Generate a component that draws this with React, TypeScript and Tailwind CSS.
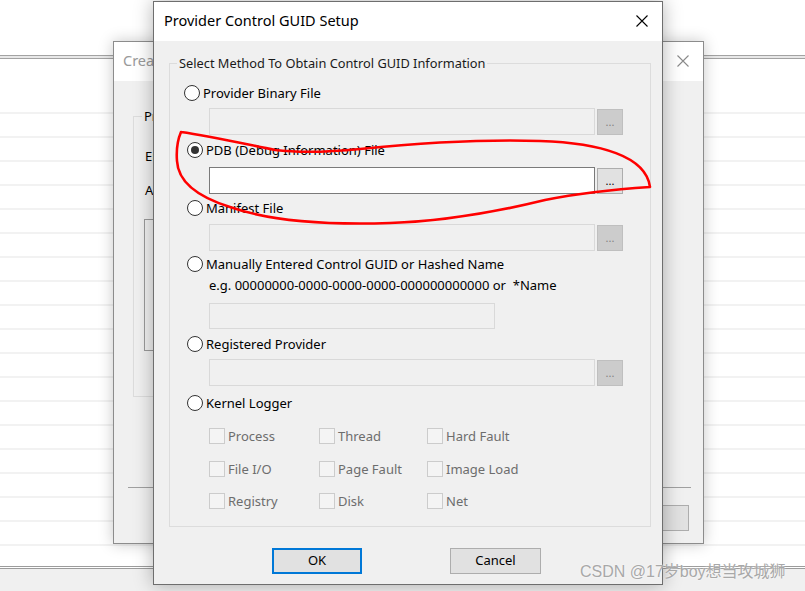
import React from 'react';

const FONT = '"Noto Sans", "Liberation Sans", sans-serif';

function CloseIcon({ color = '#000' }: { color?: string }) {
  return (
    <svg width="12" height="12" viewBox="0 0 12 12">
      <path d="M0.5 0.5 L11.5 11.5 M11.5 0.5 L0.5 11.5" stroke={color} strokeWidth="1.1" />
    </svg>
  );
}

function Radio({ checked = false }: { checked?: boolean }) {
  return (
    <span className="flex h-[16px] w-[16px] shrink-0 items-center justify-center rounded-full border-[1.5px] border-[#333333] bg-white">
      {checked && <span className="h-[8px] w-[8px] rounded-full bg-[#333333]" />}
    </span>
  );
}

function RadioRow({
  label,
  checked,
  className = '',
  first = false,
}: {
  label: string;
  checked?: boolean;
  className?: string;
  first?: boolean;
}) {
  return (
    <div className={`flex h-[18px] items-center gap-[3px] ${first ? 'ml-[14px]' : 'ml-[17px]'} ${className}`}>
      <Radio checked={checked} />
      <span className="text-[13px] leading-[18px] text-black">{label}</span>
    </div>
  );
}

function FileField({ enabled = false, className = '' }: { enabled?: boolean; className?: string }) {
  return (
    <div className={`ml-[39px] flex items-center gap-[2px] ${className}`}>
      <div
        className={`h-[27px] w-[386px] border ${
          enabled ? 'border-[#7a7a7a] bg-white' : 'border-[#d9d9d9] bg-[#f0f0f0]'
        }`}
      />
      <div
        className={`flex h-[26px] w-[26px] items-end justify-center border pb-[7px] text-[11px] leading-none ${
          enabled ? 'border-[#adadad] bg-[#e1e1e1] text-black' : 'border-[#bfbfbf] bg-[#cccccc] text-[#838383]'
        }`}
      >
        ...
      </div>
    </div>
  );
}

function Check({ label }: { label: string }) {
  return (
    <div className="flex h-[18px] items-center gap-[3px]">
      <span className="h-[16px] w-[16px] shrink-0 border border-[#cccccc] bg-[#f4f4f4]" />
      <span className="text-[13px] leading-[18px] text-[#6d6d6d]">{label}</span>
    </div>
  );
}

function RedMark() {
  return (
    <svg className="pointer-events-none absolute left-0 top-0" width="805" height="591">
      <path
        d="M181 132 C210 136 245 144 275 150 C300 153 330 152 360 149 C420 143 480 139 540 141 C600 143 646 156 650 187 C620 189 580 193 545 200 C500 211 450 221 390 223 C330 225 270 221 230 207 C195 196 178 181 177 161 C176 148 178 139 181 132"
        fill="none"
        stroke="#ff0000"
        strokeWidth="2.6"
        strokeLinecap="round"
        strokeLinejoin="round"
      />
    </svg>
  );
}

export default function App() {
  const rows = Array.from({ length: 20 });

  return (
    <div className="relative h-[591px] w-[805px] overflow-hidden bg-white" style={{ fontFamily: FONT }}>
      {/* list view behind the dialogs */}
      <div className="flex h-full flex-col">
        <div className="h-[55px]" />
        <div className="h-[4px] border-y border-[#a3a3a3] bg-[#e8e8e8]" />
        <div className="h-[53px]" />
        <div className="flex-1 overflow-hidden">
          {rows.map((_, i) => (
            <div key={i} className="h-[24px] border-t-2 border-[#f2f2f2]" />
          ))}
        </div>
        <div className="h-[3px] border-y border-[#9c9c9c] bg-white" />
        <div className="h-[22px] bg-[#f0f0f0]" />
      </div>

      {/* Create session dialog (behind) */}
      <div className="absolute left-[113px] top-[41px] flex h-[503px] w-[591px] flex-col border border-[#8c8c8c] bg-[#f0f0f0] shadow-[0_0_14px_rgba(0,0,0,0.22)]">
        <div className="flex h-[39px] items-center justify-between bg-white pb-[2px] pl-[9px] pr-[14px]">
          <span className="text-[14.5px] text-[#9a9a9a]">Create New Session</span>
          <CloseIcon color="#8a8a8a" />
        </div>
        <div className="flex flex-1 flex-col px-[13px]">
          <fieldset className="ml-[6px] mt-[26px] h-[290px] w-[520px] border border-[#dcdcdc]">
            <legend className="ml-[8px] px-[2px] text-[13px] leading-[18px]">Provider</legend>
            <div className="ml-[11px] mt-[22px] text-[13px] leading-[18px]">Enable Property</div>
            <div className="ml-[11px] mt-[16px] text-[13px] leading-[18px]">Available Providers</div>
            <div className="ml-[10px] mt-[20px] h-[132px] w-[480px] border border-[#9a9a9a] bg-[#f0f0f0]" />
          </fieldset>
          <div className="ml-[1px] mt-[90px] h-px w-[563px] bg-[#a0a0a0]" />
          <div className="mt-[17px] flex justify-end pr-[1px]">
            <div className="h-[26px] w-[90px] border border-[#adadad] bg-[#e1e1e1]" />
          </div>
        </div>
      </div>

      {/* Provider Control GUID Setup dialog */}
      <div className="absolute left-[153px] top-[1px] flex h-[584px] w-[510px] flex-col border border-[#6e6e6e] bg-[#f0f0f0] shadow-[0_0_18px_rgba(0,0,0,0.3)]">
        <div className="flex h-[39px] shrink-0 items-center justify-between bg-white pb-[2px] pl-[10px] pr-[14px]">
          <span className="text-[14.5px] text-black">Provider Control GUID Setup</span>
          <CloseIcon />
        </div>
        <div className="flex flex-1 flex-col px-[15px] pt-[13px]">
          <fieldset className="h-[473px] w-[482px] border border-[#dcdcdc]">
            <legend className="ml-[7px] px-[2px] text-[12.8px] leading-[18px] text-[#1a1a1a]">
              Select Method To Obtain Control GUID Information
            </legend>
            <RadioRow first label="Provider Binary File" className="mt-[12px]" />
            <FileField className="mt-[6px]" />
            <RadioRow checked label="PDB (Debug Information) File" className="mt-[6px]" />
            <FileField enabled className="mt-[8px]" />
            <RadioRow label="Manifest File" className="mt-[5px]" />
            <FileField className="mt-[7px]" />
            <RadioRow label="Manually Entered Control GUID or Hashed Name" className="mt-[4px]" />
            <div className="ml-[39px] mt-[3px] text-[13px] leading-[18px] text-black">
              e.g. 00000000-0000-0000-0000-000000000000 or&nbsp; *Name
            </div>
            <div className="ml-[39px] mt-[9px] h-[26px] w-[286px] border border-[#d9d9d9] bg-[#f0f0f0]" />
            <RadioRow label="Registered Provider" className="mt-[6px]" />
            <FileField className="mt-[6px]" />
            <RadioRow label="Kernel Logger" className="mt-[8px]" />
            <div className="ml-[39px] mt-[15px] grid grid-cols-[110px_108px_auto] gap-y-[14.5px]">
              <Check label="Process" />
              <Check label="Thread" />
              <Check label="Hard Fault" />
              <Check label="File I/O" />
              <Check label="Page Fault" />
              <Check label="Image Load" />
              <Check label="Registry" />
              <Check label="Disk" />
              <Check label="Net" />
            </div>
          </fieldset>
          <div className="ml-[103px] mt-[21px] flex gap-[88px]">
            <button className="flex h-[26px] w-[90px] items-center justify-center border-2 border-[#0078d7] bg-[#e1e1e1] text-[13px] text-black">
              OK
            </button>
            <button className="flex h-[26px] w-[91px] items-center justify-center border border-[#adadad] bg-[#e1e1e1] text-[13px] text-black">
              Cancel
            </button>
          </div>
        </div>
      </div>

      <RedMark />

      {/* watermark */}
      <div
        className="pointer-events-none absolute left-[580px] top-[561px] text-[16px] leading-[22px] text-[#a8a8a8] [text-shadow:0_0_2px_#ffffff]"
        style={{ fontFamily: '"Liberation Sans", "Noto Sans CJK SC", sans-serif' }}
      >
        CSDN @17岁boy想当攻城狮
      </div>
    </div>
  );
}
